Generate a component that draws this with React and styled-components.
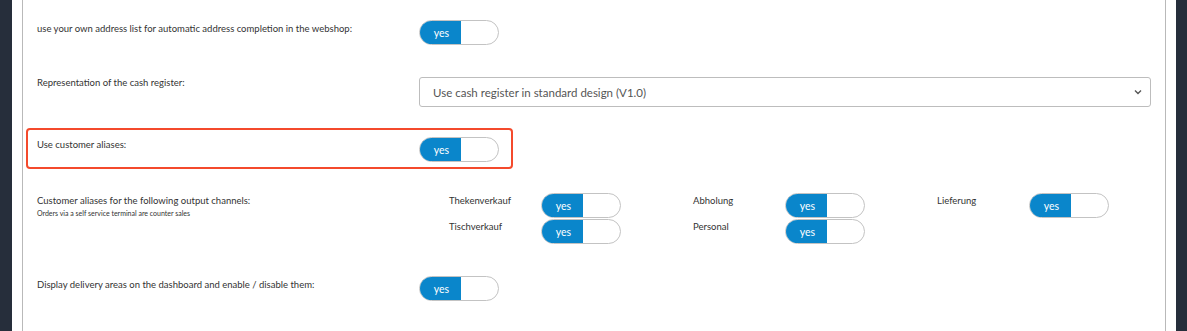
import React from "react";
import styled, { createGlobalStyle } from "styled-components";

const Global = createGlobalStyle`
  html, body { margin: 0; padding: 0; background: #fff; }
  body { font-family: Lato, "Open Sans", sans-serif; color: #333; }
`;

const Screen = styled.div`
  display: flex;
  width: 1187px;
  height: 331px;
  overflow: hidden;
  background: #fff;
`;

const SideBar = styled.div`
  flex: 0 0 ${(p) => p.$w}px;
  background: #262e3b;
`;

const Gutter = styled.div`
  flex: 0 0 ${(p) => p.$w}px;
`;

const Panel = styled.div`
  flex: 1;
  border-left: 1px solid #b9b9b9;
  border-right: 1px solid #b9b9b9;
  padding: 11px 3px 0;
  display: flex;
  flex-direction: column;
  align-items: stretch;
`;

const Row = styled.div`
  display: flex;
  align-items: flex-start;
  border: 2px solid ${(p) => (p.$highlight ? "#f44a2c" : "transparent")};
  border-radius: 4px;
  padding: 7px ${(p) => (p.$highlight ? 12 : 9)}px 5px 9px;
  margin-bottom: ${(p) => p.$mb}px;
  align-self: ${(p) => (p.$highlight ? "flex-start" : "stretch")};
`;

const LabelCol = styled.div`
  flex: 0 0 382px;
  padding-top: ${(p) => p.$pt || 0}px;
`;

const Label = styled.div`
  font-size: 9.5px;
  line-height: 12px;
  color: #333;
`;

const SubLabel = styled.div`
  font-size: 7px;
  line-height: 10px;
  color: #333;
  margin-top: 1px;
`;

const Control = styled.div`
  flex: 1;
  display: flex;
`;

const Toggle = styled.div`
  box-sizing: border-box;
  width: 80px;
  height: 25px;
  border: 1px solid #c3c3c3;
  border-radius: 13px;
  overflow: hidden;
  display: flex;
  background: #fff;
`;

const ToggleOn = styled.div`
  width: 39px;
  background: #0a86cb;
  color: #fff;
  font-size: 10.5px;
  display: flex;
  align-items: center;
  justify-content: center;
  padding-left: 2px;
`;

const Select = styled.div`
  box-sizing: border-box;
  flex: 1;
  height: 30px;
  border: 1px solid #bdbdbd;
  border-radius: 3px;
  display: flex;
  align-items: center;
  justify-content: space-between;
  padding: 0 8px 0 13px;
  font-size: 11.5px;
  color: #555;
`;

const ChannelGrid = styled.div`
  flex: 1;
  display: grid;
  grid-template-columns: repeat(3, 1fr);
`;

const ChannelCol = styled.div`
  display: flex;
  flex-direction: column;
  gap: 1px;
`;

const ChannelItem = styled.div`
  display: grid;
  grid-template-columns: 92px 80px;
  padding-left: 30px;
`;

const ChannelLabel = styled.div`
  font-size: 9.5px;
  line-height: 12px;
  padding-top: 2px;
`;

function YesToggle() {
  return (
    <Toggle>
      <ToggleOn>yes</ToggleOn>
    </Toggle>
  );
}

const Chevron = () => (
  <svg width="8" height="6" viewBox="0 0 8 6">
    <path d="M1 1.5 L4 4.5 L7 1.5" fill="none" stroke="#555" strokeWidth="1.4" />
  </svg>
);

const channels = [
  ["Thekenverkauf", "Tischverkauf"],
  ["Abholung", "Personal"],
  ["Lieferung"],
];

export default function App() {
  return (
    <Screen>
      <Global />
      <SideBar $w={12} />
      <Gutter $w={10} />
      <Panel>
        <Row $mb={16}>
          <LabelCol $pt={3}>
            <Label>use your own address list for automatic address completion in the webshop:</Label>
          </LabelCol>
          <Control>
            <YesToggle />
          </Control>
        </Row>
        <Row $mb={14}>
          <LabelCol $pt={0}>
            <Label>Representation of the cash register:</Label>
          </LabelCol>
          <Control>
            <Select>
              <span>Use cash register in standard design (V1.0)</span>
              <Chevron />
            </Select>
          </Control>
        </Row>
        <Row $highlight $mb={15}>
          <LabelCol $pt={2}>
            <Label>Use customer aliases:</Label>
          </LabelCol>
          <Control>
            <YesToggle />
          </Control>
        </Row>
        <Row $mb={16}>
          <LabelCol $pt={2}>
            <Label>Customer aliases for the following output channels:</Label>
            <SubLabel>Orders via a self service terminal are counter sales</SubLabel>
          </LabelCol>
          <ChannelGrid>
            {channels.map((col, i) => (
              <ChannelCol key={i}>
                {col.map((name) => (
                  <ChannelItem key={name}>
                    <ChannelLabel>{name}</ChannelLabel>
                    <YesToggle />
                  </ChannelItem>
                ))}
              </ChannelCol>
            ))}
          </ChannelGrid>
        </Row>
        <Row $mb={0}>
          <LabelCol $pt={3}>
            <Label>Display delivery areas on the dashboard and enable / disable them:</Label>
          </LabelCol>
          <Control>
            <YesToggle />
          </Control>
        </Row>
      </Panel>
      <Gutter $w={10} />
      <SideBar $w={11} />
    </Screen>
  );
}
